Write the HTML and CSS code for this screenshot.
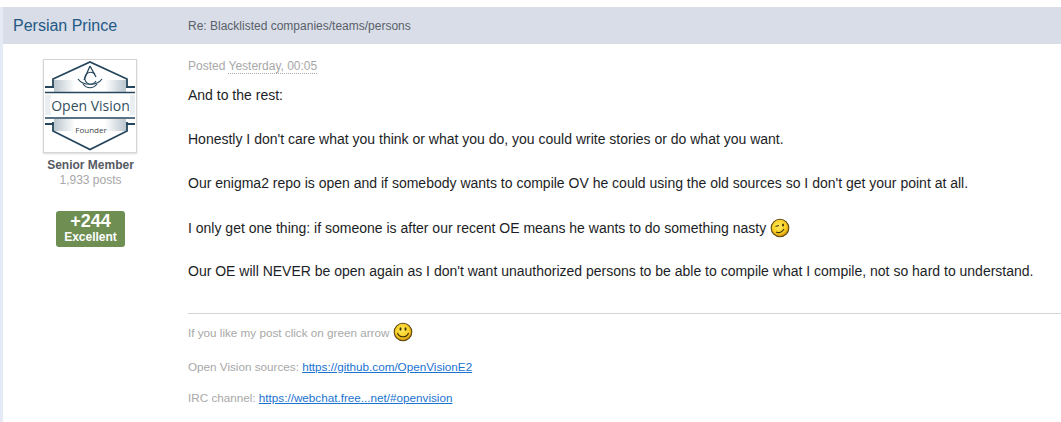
FILE: index.html
```html
<!DOCTYPE html>
<html lang="en">

<head>
    <meta charset="UTF-8">
    <title>Re: Blacklisted companies/teams/persons</title>
    <link rel="stylesheet" href="styles.css">
</head>

<body>
    <div class="post">
        <!-- Post header -->
        <div class="post-head">
            <h3 class="author"><a href="#">Persian Prince</a></h3>
            <div class="post-title">Re: Blacklisted companies/teams/persons</div>
        </div>

        <div class="post-main">
            <!-- Author column -->
            <div class="author-col">
                <div class="avatar">
                    <svg width="90" height="90" viewBox="0 0 90 90">
                        <defs>
                            <linearGradient id="fadeL" gradientUnits="userSpaceOnUse" x1="8" y1="0" x2="30" y2="0">
                                <stop offset="0" stop-color="#5f7a8c" />
                                <stop offset="1" stop-color="#5f7a8c" stop-opacity="0" />
                            </linearGradient>
                            <linearGradient id="fadeR" gradientUnits="userSpaceOnUse" x1="82" y1="0" x2="60" y2="0">
                                <stop offset="0" stop-color="#5f7a8c" />
                                <stop offset="1" stop-color="#5f7a8c" stop-opacity="0" />
                            </linearGradient>
                        </defs>
                        <!-- hexagon -->
                        <path d="M8 25 V18 L45 1 L82 18 V25" fill="none" stroke="#25465c" stroke-width="1.8" />
                        <path d="M8 61 V70 L45 88.5 L82 70 V61" fill="none" stroke="#25465c" stroke-width="1.8" />
                        <!-- emblem -->
                        <path d="M45 5 L39 19 M45 5 L51 16" fill="none" stroke="#25465c" stroke-width="1.3" />
                        <path d="M50 13 A6 6 0 1 0 51 20" fill="none" stroke="#25465c" stroke-width="1.1" />
                        <path d="M33 18 C38 25 52 25 57 18 M38 23 C42 28 48 28 52 23" fill="none" stroke="#25465c" stroke-width="1.2" />
                        <!-- bars -->
                        <path d="M0 26 H9 M81 26 H90 M0 63 H9 M81 63 H90" stroke="#25465c" stroke-width="1.8" />
                        <path d="M0 31.5 H90 M0 57 H90" stroke="#25465c" stroke-width="1.6" />
                        <!-- stripes -->
                        <path d="M9 20 H30 M9 22 H30 M9 24 H30 M9 26 H30 M9 28 H30 M9 30 H30 M9 59 H30 M9 61 H30 M9 63 H30 M9 65 H30 M9 67 H30 M9 69 H30" stroke="url(#fadeL)" stroke-width="0.9" />
                        <path d="M60 20 H81 M60 22 H81 M60 24 H81 M60 26 H81 M60 28 H81 M60 30 H81 M60 59 H81 M60 61 H81 M60 63 H81 M60 65 H81 M60 67 H81 M60 69 H81" stroke="url(#fadeR)" stroke-width="0.9" />
                        <path d="M0 35 H6 M0 37 H6 M0 39 H5 M0 41 H5 M0 43 H5 M0 45 H5 M0 47 H5 M0 49 H5 M0 51 H6 M0 53 H6 M85 35 H90 M85 37 H90 M85 39 H90 M85 41 H90 M85 43 H90 M85 45 H90 M85 47 H90 M85 49 H90 M85 51 H90 M85 53 H90" stroke="#c3ced6" stroke-width="0.7" />
                        <text x="45.5" y="49.5" class="logo-name">Open Vision</text>
                        <text x="46" y="72" class="logo-rank">Founder</text>
                    </svg>
                </div>
                <div class="member-title">Senior Member</div>
                <div class="post-count">1,933 posts</div>
                <div class="rep-badge">
                    <span class="rep-num">+244</span>
                    <span class="rep-label">Excellent</span>
                </div>
            </div>

            <!-- Post body -->
            <div class="post-body">
                <div class="post-date">Posted <span class="date-abbr">Yesterday, 00:05</span></div>
                <div class="post-text">
                    <p>And to the rest:</p>
                    <p>Honestly I don't care what you think or what you do, you could write stories or do what you want.</p>
                    <p>Our enigma2 repo is open and if somebody wants to compile OV he could using the old sources so I don't get your point at all.</p>
                    <p class="wink-line">I only get one thing: if someone is after our recent OE means he wants to do something nasty
                        <svg class="smiley" width="20" height="20" viewBox="0 0 20 20">
                            <defs>
                                <radialGradient id="face1" cx="45%" cy="40%" r="60%">
                                    <stop offset="0" stop-color="#ffe95c" />
                                    <stop offset="0.65" stop-color="#f8cf22" />
                                    <stop offset="1" stop-color="#d08c0a" />
                                </radialGradient>
                            </defs>
                            <circle cx="10" cy="10" r="8.8" fill="url(#face1)" stroke="#5e4a12" stroke-width="1.1" />
                            <path d="M6 14 C9 15.5 12.5 14 14 11" fill="none" stroke="#3d3108" stroke-width="1.1" />
                            <path d="M5.5 8.5 L9 7.5" stroke="#3d3108" stroke-width="1.1" />
                            <ellipse cx="13" cy="7" rx="1" ry="1.6" fill="#3d3108" />
                        </svg>
                    </p>
                    <p>Our OE will NEVER be open again as I don't want unauthorized persons to be able to compile what I compile, not so hard to understand.</p>
                </div>
                <!-- Signature -->
                <div class="signature">
                    <p>If you like my post click on green arrow
                        <svg class="smiley" width="20" height="20" viewBox="0 0 20 20">
                            <defs>
                                <radialGradient id="face2" cx="45%" cy="40%" r="60%">
                                    <stop offset="0" stop-color="#ffe95c" />
                                    <stop offset="0.65" stop-color="#f8cf22" />
                                    <stop offset="1" stop-color="#d08c0a" />
                                </radialGradient>
                            </defs>
                            <circle cx="10" cy="10" r="8.8" fill="url(#face2)" stroke="#5e4a12" stroke-width="1.1" />
                            <path d="M4.5 11 C6 16 14 16 15.5 11" fill="none" stroke="#3d3108" stroke-width="1.1" />
                            <ellipse cx="7.5" cy="7" rx="1" ry="1.7" fill="#3d3108" />
                            <ellipse cx="12.5" cy="7" rx="1" ry="1.7" fill="#3d3108" />
                        </svg>
                    </p>
                    <p>Open Vision sources: <a href="#">https://github.com/OpenVisionE2</a></p>
                    <p>IRC channel: <a href="#">https://webchat.free...net/#openvision</a></p>
                </div>
            </div>
        </div>
    </div>
</body>

</html>
```

FILE: styles.css
```css
body {
    margin: 0;
    background: #fff;
    font-family: "Liberation Sans", Arial, sans-serif;
    overflow: hidden;
}

.post {
    min-height: 415px;
    margin-top: 7px;
    border-left: 3px solid #e4ebf5;
}

/* Header bar */
.post-head {
    display: flex;
    align-items: center;
    height: 37px;
    background: #d8dde8;
}

.author {
    width: 185px;
    margin: 0;
    padding-left: 10px;
    box-sizing: border-box;
    font-size: 16px;
    font-weight: normal;
}

.author a {
    color: #225985;
    text-decoration: none;
}

.post-title {
    font-size: 12px;
    color: #5a5f68;
}

.post-main {
    display: flex;
}

/* Left column */
.author-col {
    width: 175px;
    flex-shrink: 0;
    display: flex;
    flex-direction: column;
    align-items: center;
    padding-top: 15px;
}

.avatar {
    display: flex;
    margin-right: 1px;
    padding: 1px;
    border: 1px solid #d5d5d5;
    box-shadow: 0 1px 2px rgba(0, 0, 0, 0.15);
}

.logo-name {
    font-size: 14px;
    fill: #33505f;
    text-anchor: middle;
    font-family: "Open Sans", sans-serif;
}

.logo-rank {
    font-size: 8px;
    fill: #444;
    text-anchor: middle;
    font-family: "Open Sans", sans-serif;
}

.member-title {
    margin-top: 5px;
    font-size: 12px;
    font-weight: bold;
    color: #555a63;
}

.post-count {
    margin-top: 1px;
    font-size: 12px;
    color: #a8a8a8;
}

.rep-badge {
    display: flex;
    flex-direction: column;
    align-items: center;
    width: 69px;
    height: 36px;
    margin-top: 24px;
    background: #6e8e52;
    border-radius: 3px;
    color: #fff;
    font-weight: bold;
}

.rep-num {
    font-size: 18px;
    line-height: 20px;
}

.rep-label {
    font-size: 12px;
    line-height: 13px;
}

/* Right column */
.post-body {
    flex: 1;
    min-width: 0;
    padding: 15px 0 0 10px;
}

.post-date {
    font-size: 12px;
    color: #a8a8a8;
}

.date-abbr {
    border-bottom: 1px dotted #a8a8a8;
}

.post-text {
    margin-top: 13px;
    padding-bottom: 32px;
    border-bottom: 1px solid #d5d5d5;
    font-size: 14px;
    line-height: 19px;
    color: #1c1e26;
}

.post-text p {
    margin: 0 0 25px;
}

.post-text .wink-line {
    margin-bottom: 24px;
}

.post-text p:last-child {
    margin-bottom: 0;
}

.smiley {
    vertical-align: -5px;
}

.signature {
    padding-top: 8px;
    font-size: 11.7px;
    color: #a8a8a8;
}

.signature p {
    margin: 0 0 18px;
}

.signature a {
    color: #1a73d0;
}
```
